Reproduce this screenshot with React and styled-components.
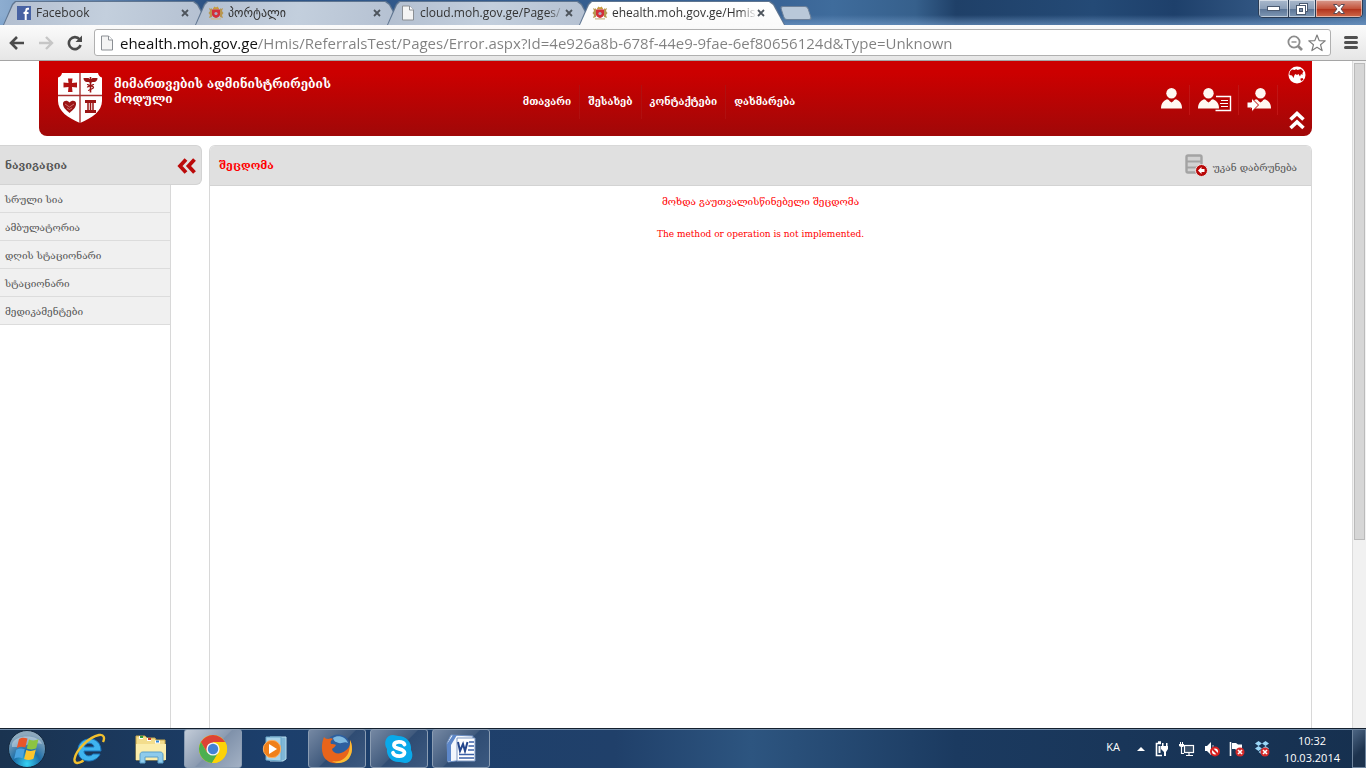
import React, { useState } from "react";
import styled, { createGlobalStyle } from "styled-components";

const tabs = [
  { id: "fb", title: "Facebook", icon: "facebook" },
  { id: "portal", title: "პორტალი", icon: "crest" },
  { id: "cloud", title: "cloud.moh.gov.ge/Pages/", icon: "page" },
  { id: "ehealth", title: "ehealth.moh.gov.ge/Hmis", icon: "crest" },
];

const menu = ["მთავარი", "შესახებ", "კონტაქტები", "დახმარება"];

const sections = [
  "სრული სია",
  "ამბულატორია",
  "დღის სტაციონარი",
  "სტაციონარი",
  "მედიკამენტები",
];

function App() {
  const [currentTab, setCurrentTab] = useState("ehealth");
  const [url, setUrl] = useState(
    "ehealth.moh.gov.ge/Hmis/ReferralsTest/Pages/Error.aspx?Id=4e926a8b-678f-44e9-9fae-6ef80656124d&Type=Unknown"
  );

  return (
    <Screen>
      <GlobalStyle />
      <TabStrip>
        <TabList>
          {tabs.map((tab) => (
            <Tab key={tab.id} $active={tab.id === currentTab}>
              <TabButton onClick={() => setCurrentTab(tab.id)}>
                <TabIcon name={tab.icon} />
                <TabTitle>{tab.title}</TabTitle>
              </TabButton>
              <TabClose aria-label="Close tab">
                <svg width="8" height="8" viewBox="0 0 8 8">
                  <path d="M1 1l6 6M7 1L1 7" stroke="#4d545c" strokeWidth="1.8" />
                </svg>
              </TabClose>
            </Tab>
          ))}
          <NewTab aria-label="New tab" />
        </TabList>
        <WindowButtons>
          <WindowButton aria-label="Minimize" $width="29px">
            <svg width="13" height="5" viewBox="0 0 13 5">
              <rect x="0.5" y="0.5" width="12" height="4" fill="#fff" stroke="#4b5a70" />
            </svg>
          </WindowButton>
          <WindowButton aria-label="Restore" $width="27px">
            <svg width="12" height="12" viewBox="0 0 12 12">
              <rect x="3.5" y="0.5" width="8" height="8" fill="#fff" stroke="#4b5a70" />
              <rect x="0.5" y="2.5" width="9" height="9" fill="#fff" stroke="#4b5a70" />
              <rect x="3.5" y="5.5" width="3" height="3" fill="#7f90a8" stroke="#4b5a70" />
            </svg>
          </WindowButton>
          <WindowButton aria-label="Close" $width="47px" $red>
            <svg width="12" height="10" viewBox="0 0 12 10">
              <path
                d="M0.5 0.5h3.5l2 2.3 2-2.3h3.5L8 5l3.5 4.5H8L6 7.2 4 9.5H0.5L4 5z"
                fill="#fff"
                stroke="#5a4a55"
              />
            </svg>
          </WindowButton>
        </WindowButtons>
      </TabStrip>

      <Toolbar>
        <ToolButton aria-label="Back">
          <svg width="16" height="14" viewBox="0 0 16 14">
            <path d="M15 7H3M8 1L2 7l6 6" fill="none" stroke="#4a4a4a" strokeWidth="2.6" />
          </svg>
        </ToolButton>
        <ToolButton aria-label="Forward">
          <svg width="16" height="14" viewBox="0 0 16 14">
            <path d="M1 7h12M8 1l6 6-6 6" fill="none" stroke="#c6c6c6" strokeWidth="2.4" />
          </svg>
        </ToolButton>
        <ToolButton aria-label="Reload">
          <svg width="16" height="16" viewBox="0 0 16 16">
            <path
              d="M12.6 4.4A6 6 0 1 0 13.6 10"
              fill="none"
              stroke="#4a4a4a"
              strokeWidth="2.6"
            />
            <path d="M15 0.5V7H8.5z" fill="#4a4a4a" />
          </svg>
        </ToolButton>
        <AddressBar>
          <TabIcon name="page" />
          <Address
            aria-label="Address"
            value={url}
            onChange={(e) => setUrl(e.target.value)}
          />
          <AddressButton aria-label="Zoom">
            <svg width="16" height="16" viewBox="0 0 16 16">
              <circle cx="7" cy="7" r="5.6" fill="none" stroke="#8c8c8c" strokeWidth="1.8" />
              <path d="M4.5 7h5" stroke="#8c8c8c" strokeWidth="1.4" />
              <path d="M11 11l4 4" stroke="#8c8c8c" strokeWidth="2.6" />
            </svg>
          </AddressButton>
          <AddressButton aria-label="Bookmark">
            <svg width="18" height="18" viewBox="0 0 18 18">
              <path
                d="M9 1l2.2 5.6 6 .3-4.7 3.8 1.6 5.9L9 13.3l-5.1 3.3 1.6-5.9L.8 6.9l6-.3z"
                fill="#fff"
                stroke="#7d7d7d"
                strokeWidth="1.2"
                strokeLinejoin="round"
              />
            </svg>
          </AddressButton>
        </AddressBar>
        <ToolButton aria-label="Menu">
          <svg width="14" height="13" viewBox="0 0 14 13">
            <path
              d="M1.5 1.5h11M1.5 6.5h11M1.5 11.5h11"
              stroke="#505050"
              strokeWidth="3"
              strokeLinecap="round"
            />
          </svg>
        </ToolButton>
      </Toolbar>

      <Viewport>
        <Page>
          <Header>
            <Brand>
              <Shield />
              <BrandTitle>მიმართვების ადმინისტრირების მოდული</BrandTitle>
            </Brand>
            <Menu>
              {menu.map((item) => (
                <MenuLink href="#" key={item}>
                  {item}
                </MenuLink>
              ))}
            </Menu>
            <UserActions>
              <UserButton aria-label="Profile">
                <svg width="22" height="22" viewBox="0 0 22 22">
                  <Person x={0} />
                </svg>
              </UserButton>
              <UserButton aria-label="User details">
                <svg width="34" height="24" viewBox="0 0 34 24">
                  <Person x={0} />
                  <path d="M18 8.5h14.5v14H17.5" fill="none" stroke="#fff" strokeWidth="1.4" />
                  <path d="M23 12.5h7M22 15.5h8M23 18.5h7" stroke="#fff" strokeWidth="1.2" />
                </svg>
              </UserButton>
              <UserButton aria-label="Sign in">
                <svg width="24" height="24" viewBox="0 0 24 24">
                  <Person x={3} />
                  <path
                    d="M0 14h4.500V10l7 7-7 7v-4H0z"
                    fill="#fff"
                    stroke="#b50505"
                    strokeWidth="1"
                  />
                </svg>
              </UserButton>
            </UserActions>
            <HeaderTools>
              <IconButton aria-label="Language">
                <svg width="18" height="18" viewBox="0 0 18 18">
                  <circle cx="9" cy="9" r="8.5" fill="#fff" />
                  <path
                    d="M2 5.500l2-2 3 .5 1-1 1.500 1L13 3l2.500 2.500-1 1.500v2l-1.500-1-1 2.500-1.500-2.500-1.500 1-1.500-1-1 1L5.500 12 4 9.500 1.500 9V7z"
                    fill="#c20303"
                  />
                  <path d="M12.500 12.500l2-.5 1 1.500-2 1.500-1-1z" fill="#c20303" />
                </svg>
              </IconButton>
              <IconButton aria-label="Hide header">
                <svg width="16" height="20" viewBox="0 0 16 20">
                  <path
                    d="M1.500 8.500L8 2.500l6.500 6M1.500 17L8 11l6.500 6"
                    fill="none"
                    stroke="#fff"
                    strokeWidth="3.600"
                  />
                </svg>
              </IconButton>
            </HeaderTools>
          </Header>

          <Columns>
            <Sidebar>
              <SidebarHeader>
                <SectionTitle>ნავიგაცია</SectionTitle>
                <IconButton aria-label="Hide navigation">
                  <svg width="19" height="16" viewBox="0 0 19 16">
                    <path
                      d="M9 1.500L3 8l6 6.500M17.500 1.500L11.500 8l6 6.500"
                      fill="none"
                      stroke="#bb0a0a"
                      strokeWidth="3.800"
                    />
                  </svg>
                </IconButton>
              </SidebarHeader>
              <SidebarList>
                {sections.map((name) => (
                  <SidebarItem key={name}>
                    <SidebarLink href="#">{name}</SidebarLink>
                  </SidebarItem>
                ))}
              </SidebarList>
            </Sidebar>
            <Main>
              <MainHeader>
                <SectionTitle $red>შეცდომა</SectionTitle>
                <BackLink href="#">
                  <svg width="23" height="23" viewBox="0 0 23 23">
                    <rect x="1.500" y="1.500" width="15" height="17" rx="1.500" fill="#d2d2d2" stroke="#a3a3a3" strokeWidth="2.400" />
                    <path d="M1 7.500h16M1 13.500h10" stroke="#a3a3a3" strokeWidth="2" />
                    <circle cx="16.500" cy="16.500" r="6" fill="#b90808" stroke="#e8e8e8" />
                    <path d="M13 16.500l3.500-3.500v2h3v3h-3v2z" fill="#fff" />
                  </svg>
                  <BackText>უკან დაბრუნება</BackText>
                </BackLink>
              </MainHeader>
              <Message>მოხდა გაუთვალისწინებელი შეცდომა</Message>
              <Details>The method or operation is not implemented.</Details>
            </Main>
          </Columns>
        </Page>
        <Scrollbar>
          <ScrollThumb />
        </Scrollbar>
      </Viewport>

      <Taskbar>
        <StartButton aria-label="Start">
          <WindowsOrb />
        </StartButton>
        <TaskList>
          <TaskButton aria-label="Internet Explorer">
            <ExplorerE />
          </TaskButton>
          <TaskButton aria-label="Windows Explorer">
            <Folder />
          </TaskButton>
          <TaskButton aria-label="Google Chrome" $open $focused>
            <Chrome />
          </TaskButton>
          <TaskButton aria-label="Media Player">
            <MediaPlayer />
          </TaskButton>
          <TaskButton aria-label="Firefox" $open>
            <Firefox />
          </TaskButton>
          <TaskButton aria-label="Skype" $open>
            <Skype />
          </TaskButton>
          <TaskButton aria-label="Word" $open>
            <Word />
          </TaskButton>
        </TaskList>
        <Tray>
          <Language>KA</Language>
          <TrayButton aria-label="Show hidden icons">
            <svg width="8" height="4" viewBox="0 0 8 4">
              <path d="M4 0l4 4H0z" fill="#fff" />
            </svg>
          </TrayButton>
          <TrayButton aria-label="Power">
            <svg width="16" height="16" viewBox="0 0 16 16">
              <path d="M8 14.500H2.500v-12H7M4 1h3" fill="none" stroke="#fff" strokeWidth="1.600" />
              <path d="M4.500 5v7h2V5z" fill="#fff" />
              <path d="M7 5h7v3l-2 3v4h-2v-4L7 8zM8 2h1.500v3H8zM12 2h1.500v3H12z" fill="#fff" />
            </svg>
          </TrayButton>
          <TrayButton aria-label="Network">
            <svg width="16" height="16" viewBox="0 0 16 16">
              <rect x="5.500" y="4.500" width="9" height="7" fill="#3b5069" stroke="#fff" strokeWidth="1.200" />
              <path d="M7 14.500h7M10 12v2M2.500 6v6.500H5" fill="none" stroke="#fff" strokeWidth="1.200" />
              <path d="M1 1h1v2h1V1h1v2h1v2L4 6H2L0 5V3h1z" fill="#fff" />
            </svg>
          </TrayButton>
          <TrayButton aria-label="Volume">
            <svg width="16" height="16" viewBox="0 0 16 16">
              <path d="M1 5h2l4-4v13l-4-4H1z" fill="#fff" />
              <path d="M9 4v4" stroke="#b5c2d1" />
              <circle cx="11" cy="10.500" r="4" fill="#fff" stroke="#d81e1e" strokeWidth="2" />
              <path d="M8.500 8l5 5" stroke="#d81e1e" strokeWidth="2" />
            </svg>
          </TrayButton>
          <TrayButton aria-label="Action center">
            <svg width="16" height="16" viewBox="0 0 16 16">
              <path d="M1.500 1v14" stroke="#fff" strokeWidth="1.600" />
              <path d="M3 2h4l2 1.500h4v6H8L6 8H3z" fill="#fff" />
              <RedCross />
            </svg>
          </TrayButton>
          <TrayButton aria-label="Dropbox">
            <svg width="16" height="16" viewBox="0 0 16 16">
              <path
                d="M4.500 0L8 2.500 4.500 5 1 2.500zM11.500 0L15 2.500 11.500 5 8 2.500zM4.500 5L8 7.500 4.500 10 1 7.500zM11.500 5L15 7.500 11.500 10 8 7.500zM8 8.500l3 2.500-3 2.500L4.500 11z"
                fill="#9bd6f7"
              />
              <RedCross />
            </svg>
          </TrayButton>
          <Clock>
            <span>10:32</span>
            <span>10.03.2014</span>
          </Clock>
          <ShowDesktop aria-label="Show desktop" />
        </Tray>
      </Taskbar>
    </Screen>
  );
}

function TabIcon({ name }) {
  switch (name) {
    case "facebook":
      return (
        <svg width="16" height="16" viewBox="0 0 16 16">
          <rect x="1" y="1" width="14" height="14" fill="#4762a3" />
          <path
            d="M13 3.800h-1.400c-1 0-1.300.5-1.300 1.300V6.500M7.500 8h5M9.700 6v9"
            fill="none"
            stroke="#fff"
            strokeWidth="2"
          />
        </svg>
      );
    case "crest":
      return (
        <svg width="16" height="16" viewBox="0 0 16 16">
          <path
            d="M1 3l2 1 1-1v9l-3 1 1-3-1.500-2L2 6zM15 3l-2 1-1-1v9l3 1-1-3 1.500-2L14 6z"
            fill="#b8964f"
          />
          <path d="M5 3.500l1.500-2L8 2.500l1.500-1L11 3.500v1H5z" fill="#c79a3c" />
          <path d="M4 4.500h8v5c0 2-2 3-4 3.500-2-.5-4-1.500-4-3.500z" fill="#d3303a" />
          <circle cx="8" cy="8.500" r="1.600" fill="#a9b0c6" />
          <path d="M3 13.800h10" stroke="#cbb98c" strokeWidth="1.200" />
        </svg>
      );
    default:
      return (
        <svg width="16" height="16" viewBox="0 0 16 16">
          <path d="M2.500 1h7L13.500 5v10h-11z" fill="#f4f4f4" stroke="#8b8f94" />
          <path d="M9.500 1v4h4" fill="#fff" stroke="#8b8f94" />
        </svg>
      );
  }
}

function Person({ x }) {
  return (
    <g transform={`translate(${x} 0)`} fill="#fff8f2">
      <circle cx="10.500" cy="5.200" r="5.200" />
      <path d="M0 20.500c0-5 2-7.500 6-9.300 1 0 2 .8 2.500 1.800l2 1.500 2-1.500c.500-1 1.500-1.800 2.500-1.800 4 1.800 6 4.300 6 9.300z" />
    </g>
  );
}

function RedCross() {
  return (
    <g>
      <circle cx="11" cy="11" r="4.500" fill="#d42a2a" />
      <path d="M9 9l4 4M13 9l-4 4" stroke="#fff" strokeWidth="1.600" />
    </g>
  );
}

function Shield() {
  return (
    <svg width="46" height="52" viewBox="0 0 46 52">
      <path
        d="M5 1h36c.500 2.500 2 4 4 4.500V29c0 10-10 17-22 22C11 46 1 39 1 29V5.500C3 5 4.500 3.500 5 1z"
        fill="#fff"
      />
      <path d="M23 1v50M1 23.500h44" stroke="#a83030" strokeWidth="1.400" />
      <path d="M11 6.500h4.500l-.5 4.500 5-.5v5l-5-.5.5 5H11l.5-5-5 .5v-5l5 .5z" fill="#b01212" />
      <path d="M33.500 5v15.500" stroke="#9b1515" strokeWidth="1.600" />
      <path
        d="M26.500 6h5l2 1.500 2-1.500h5c0 2-1 3.500-3 4h-2l-2 1-2-1h-2c-2-.5-3-2-3-4z"
        fill="#9b1515"
      />
      <path
        d="M30.500 12c0 2 6 1.500 6 3.500s-5 1.500-5 3.500M36.500 12c0 2-6 1.500-6 3.500"
        fill="none"
        stroke="#9b1515"
        strokeWidth="1.300"
      />
      <path d="M12.500 41C9 38 5.500 35 6 31c1-3 4.500-3 6.500-.5 2-2.500 6-2.500 6.500.500.500 4-3 7-6.500 10z" fill="#9b1515" />
      <path d="M8 32l4.500 3 4.500-3M10 36l2.500 1.500L15 36" fill="none" stroke="#d98383" strokeWidth=".8" />
      <path d="M28 28h11v3H28zM28 38h11v3H28z" fill="#9b1515" />
      <path d="M31 31v7M33.500 31v7M36 31v7" stroke="#9b1515" strokeWidth="1.500" />
    </svg>
  );
}

function WindowsOrb() {
  return (
    <svg width="40" height="40" viewBox="0 0 40 40">
      <defs>
        <radialGradient id="orb" cx="50%" cy="90%" r="80%">
          <stop offset="0" stopColor="#35d3f5" />
          <stop offset="0.450" stopColor="#1d6ea8" />
          <stop offset="1" stopColor="#8ea9bd" />
        </radialGradient>
      </defs>
      <circle cx="20" cy="20" r="18.500" fill="url(#orb)" stroke="#14293f" />
      <path d="M5 15C8 5 32 5 35 15c-9-3-20 4-30 3z" fill="#fff" opacity=".35" />
      <path d="M12 10c3-2 5.500-1.500 8.500-.5l-2.200 9c-3-1-5.500-1-8.500.5z" fill="#e8562a" />
      <path d="M22 10.500c3 1 6 1.500 9.500-.5l-2.200 9c-3 2-6.500 1.500-9.500.5z" fill="#8cc441" />
      <path d="M9.300 20.800c3-1.500 5.500-1.500 8.500-.5l-2.200 9c-3-1-5.500-1-8.500.5z" fill="#49a3e0" />
      <path d="M19.300 21c3 1 6 1.500 9.500-.5l-2.200 9c-3 2-6.500 1.500-9.500.5z" fill="#fbc52d" />
    </svg>
  );
}

function ExplorerE() {
  return (
    <svg width="34" height="34" viewBox="0 0 34 34">
      <path
        d="M29 19H12c0 5 6 6.500 9 3h7c-3 9-22 11-22-4C6 4 29 2 29 19zM12.500 15H22c-.5-5-9-5-9.500 0z"
        fill="#3fb4ef"
        fillRule="evenodd"
        stroke="#1a76bd"
      />
      <path
        d="M31 10c2-4 1-8-4-7C17 5 4 18 2.500 27c-.5 5 4 5 9 1.500"
        fill="none"
        stroke="#f2c02e"
        strokeWidth="2.400"
      />
    </svg>
  );
}

function Folder() {
  return (
    <svg width="34" height="32" viewBox="0 0 34 32">
      <path d="M2 3h9l2 2h8l1 2h9v20H2z" fill="#f3dd8c" stroke="#c9a84b" />
      <path d="M5 4.500h4M13 6.500h4M21 9h5" stroke="#fff" strokeWidth="3" />
      <path d="M6 4h3" stroke="#2f9c3a" strokeWidth="2" />
      <path d="M14 6h3" stroke="#c83a2b" strokeWidth="2" />
      <path d="M22 8.500h3" stroke="#2d84d4" strokeWidth="2" />
      <path d="M2 11h30v16H2z" fill="#fbedac" />
      <path d="M6 30v-8c0-2 1-3 3-3h17c2 0 3 1 3 3v8h-5v-6H11v6z" fill="#8ecbec" stroke="#5a9fca" />
    </svg>
  );
}

function Chrome() {
  return (
    <svg width="30" height="30" viewBox="0 0 30 30">
      <circle cx="15" cy="15" r="14" fill="#fcd209" />
      <path d="M2.900 8A14 14 0 0 1 27.100 8L15 8.500 9 18.500z" fill="#dd4335" />
      <path d="M2.900 8A14 14 0 0 0 14 29l6.500-10.500L9 18.500z" fill="#4caf50" />
      <path d="M27.100 8H15v5l5.500 5.500L14 29A14 14 0 0 0 27.100 8z" fill="#fcd209" />
      <circle cx="15" cy="15" r="6.600" fill="#f5f5f5" />
      <circle cx="15" cy="15" r="5.200" fill="#4382d6" />
    </svg>
  );
}

function MediaPlayer() {
  return (
    <svg width="28" height="28" viewBox="0 0 28 28">
      <path d="M9 2h16v22l-3 2H9z" fill="#7fb6d6" stroke="#b7dcee" />
      <path d="M5 2h15v24l-15-1z" fill="#a9d3e8" stroke="#6ba7c9" />
      <circle cx="11" cy="14" r="8.700" fill="#f08019" stroke="#fbb065" />
      <path d="M8 9l8 5-8 5z" fill="#fff" />
    </svg>
  );
}

function Firefox() {
  return (
    <svg width="34" height="34" viewBox="0 0 34 34">
      <circle cx="18" cy="15" r="12.500" fill="#2d5f9f" />
      <path d="M13 6c5-4 13-1 15 5-4-2-6 1-9 0s-5-1-6-5z" fill="#7fb9e0" />
      <path
        d="M4 5c1 1 2 2 4 2 2-1 4-1 5 0-2 1-3 3-2 5 2 0 4 0 5 1-1 2-3 3-4 4 1 5 8 6 13 2 4-3 6-6 5-11 3 6 3 13-2 18-7 8-21 7-25-3C1 17 2 10 4 5z"
        fill="#e8641b"
      />
      <path d="M30 8c4 8 2 19-6 22-5 2-9 1-12-1 8 2 15-3 17-10 1-4 1-8 1-11z" fill="#fbbc34" />
    </svg>
  );
}

function Skype() {
  return (
    <svg width="32" height="32" viewBox="0 0 32 32">
      <path
        d="M10 2c2 0 4 1 5 1 8 0 14 6 13 14 3 5 1 13-6 13-2 0-4-1-5-1C9 30 3 23 4 16 0 10 3 2 10 2z"
        fill="#0aa9ea"
      />
      <path
        d="M21.500 11.500C20 8 11 8 11 12.200c0 4.500 10.500 2.800 10.500 7.600 0 4.400-10 4.200-11.500 0"
        fill="none"
        stroke="#fff"
        strokeWidth="3.800"
        strokeLinecap="round"
      />
    </svg>
  );
}

function Word() {
  return (
    <svg width="32" height="32" viewBox="0 0 32 32">
      <path d="M6 2l22 1-2 23L3 29 2 10z" fill="#f3f7fc" stroke="#6d8fc4" />
      <path d="M2 28V11l6-9h4L6 12v16z" fill="#5d87c9" />
      <path d="M12 5h18v23H12z" fill="#fff" stroke="#7c97c2" />
      <path d="M13 9l2 9 3-7 2 7 2.500-9" fill="none" stroke="#24468c" strokeWidth="2" />
      <path d="M24 9h5M23.500 13h5.500M23 17h6M14 21.500h15M14 25h15" stroke="#3c62a8" strokeWidth="1.600" />
    </svg>
  );
}

const GlobalStyle = createGlobalStyle`
  body {
    margin: 0;
    font-family: "DejaVu Serif", serif;
  }

  * {
    box-sizing: border-box;
  }

  button {
    padding: 0;
    border: none;
    background: none;
    cursor: pointer;
  }

  svg {
    display: block;
    flex: none;
  }
`;

const Screen = styled.div`
  display: flex;
  flex-direction: column;
  height: 100vh;
  overflow: hidden;
  background: #fff;
`;

const TabStrip = styled.div`
  display: flex;
  justify-content: space-between;
  align-items: flex-start;
  height: 25px;
  padding: 0 3px;
  background:
    linear-gradient(to bottom, transparent 60%, rgba(120, 160, 205, 0.6)),
    linear-gradient(to right, #8dadd0, #2c5284 15%, #3a6496 57%, #3f6c9c 61%, #36608c 67%, #1f4068 70%, #244a76 80%, #1e406b 86%, #4a729f);
`;

const TabList = styled.div`
  display: flex;
  padding-top: 1px;
`;

const Tab = styled.div`
  position: relative;
  z-index: ${(props) => (props.$active ? 2 : 1)};
  display: flex;
  align-items: center;
  width: 206px;
  height: 24px;
  margin-right: -14px;
  padding: 0 16px 0 13px;
  background: #5f7590;
  clip-path: polygon(0 100%, 9px 3px, 12px 0, calc(100% - 15px) 0, calc(100% - 11px) 3px, 100% 100%);

  &::before {
    content: "";
    position: absolute;
    z-index: -1;
    inset: 1px 1px 0;
    background: ${(props) =>
      props.$active
        ? "linear-gradient(to bottom, #fff, #fafafa)"
        : "linear-gradient(100deg, #b3bfd0, #c3cfdd 50%, #b4c0d1)"};
    clip-path: polygon(0 100%, 9px 3px, 12px 0, calc(100% - 15px) 0, calc(100% - 11px) 3px, 100% 100%);
  }
`;

const TabButton = styled.button`
  display: flex;
  flex: 1;
  align-items: center;
  gap: 4px;
  min-width: 0;
  text-align: left;
`;

const TabTitle = styled.span`
  flex: 1;
  overflow: hidden;
  white-space: nowrap;
  color: #333;
  font: 12px/16px "Open Sans", "DejaVu Sans", sans-serif;
  mask-image: linear-gradient(to right, #000 88%, transparent);
`;

const TabClose = styled.button`
  padding: 4px 4px 4px 0;
`;

const NewTab = styled.button`
  width: 28px;
  height: 14px;
  margin: 5px 0 0 11px;
  border: 1px solid #6d8099;
  border-radius: 3px;
  background: #b9c8d9;
  transform: skewX(18deg);
`;

const WindowButtons = styled.div`
  display: flex;
  height: 18px;
  border: 1px solid #2b3c54;
  border-top: none;
  border-radius: 0 0 5px 5px;
  overflow: hidden;
`;

const WindowButton = styled.button`
  display: flex;
  align-items: center;
  justify-content: center;
  width: ${(props) => props.$width};
  box-shadow: inset 0 0 0 1px rgba(255, 255, 255, 0.5);
  background: ${(props) =>
    props.$red
      ? "linear-gradient(to bottom, #d99c8f, #c4543c 50%, #b0301a 51%, #cf6a4a)"
      : "linear-gradient(to bottom, #a9b9cd, #8c9fb8 50%, #5b7495 51%, #7f98b5)"};

  & + & {
    border-left: 1px solid #2b3c54;
  }
`;

const Toolbar = styled.div`
  display: flex;
  align-items: center;
  gap: 13px;
  height: 36px;
  padding: 0 8px 0 9px;
  border-bottom: 1px solid #a5a5a5;
  background: linear-gradient(to bottom, #fbfbfb, #e6e6e6);
`;

const ToolButton = styled.button`
  flex: none;
`;

const AddressBar = styled.div`
  display: flex;
  flex: 1;
  align-items: center;
  height: 27px;
  margin-left: -2px;
  padding: 0 4px;
  border: 1px solid #b0b0b0;
  border-radius: 3px;
  background: #fff;
`;

const Address = styled.input`
  flex: 1;
  min-width: 0;
  padding: 0 0 0 5px;
  border: none;
  outline: none;
  font: 15px/22px "Open Sans", sans-serif;
  color: transparent;
  /* host name in black, the rest of the url in grey */
  background: linear-gradient(to right, #111 143px, #808080 143px);
  background-clip: text;
`;

const AddressButton = styled.button`
  margin-left: 5px;
`;

const Viewport = styled.div`
  display: flex;
  flex: 1;
  min-height: 0;
`;

const Page = styled.div`
  display: flex;
  flex: 1;
  flex-direction: column;
  min-width: 0;
`;

const Header = styled.header`
  display: flex;
  height: 75px;
  margin: 0 40px 0 39px;
  border-radius: 0 0 8px 8px;
  background: linear-gradient(to bottom, #cc0000 15%, #a00808);
`;

const Brand = styled.div`
  display: flex;
  align-items: flex-start;
  gap: 11px;
  width: 38%;
  padding: 11px 0 0 18px;
`;

const BrandTitle = styled.h1`
  width: 230px;
  margin: 5px 0 0;
  color: #fff;
  font-size: 12px;
  line-height: 15px;
`;

const Menu = styled.nav`
  display: flex;
  align-items: center;
  padding-top: 6px;
`;

const MenuLink = styled.a`
  padding: 10px 8px;
  color: #fff;
  font-size: 10px;
  font-weight: bold;
  line-height: 14px;
  text-decoration: none;

  &:first-child {
    padding-left: 0;
  }

  & + & {
    border-left: 1px solid #b01010;
  }
`;

const UserActions = styled.div`
  display: flex;
  align-items: center;
  margin-left: auto;
  padding: 2px 4px 0 0;
`;

const UserButton = styled.button`
  display: flex;
  align-items: flex-start;
  height: 30px;
  padding: 3px 6px 3px 8px;
  border-right: 1px solid #c01515;
`;

const HeaderTools = styled.div`
  display: flex;
  flex-direction: column;
  align-items: center;
  justify-content: space-between;
  width: 30px;
  padding: 5px 0;
`;

const IconButton = styled.button`
  flex: none;
`;

const Columns = styled.div`
  display: flex;
  flex: 1;
  gap: 7px;
  margin: 9px 40px 0 0;
`;

const Sidebar = styled.aside`
  display: flex;
  flex-direction: column;
  width: 202px;
`;

const SidebarHeader = styled.div`
  display: flex;
  align-items: center;
  justify-content: space-between;
  height: 40px;
  padding: 2px 5px 0 5px;
  border: 1px solid #d3d3d3;
  border-left: none;
  border-radius: 0 6px 6px 0;
  background: #e0e0e0;
`;

const SectionTitle = styled.h2`
  margin: 0;
  color: ${(props) => (props.$red ? "#f00" : "#555")};
  font-size: 11px;
  line-height: 14px;
`;

const SidebarList = styled.ul`
  flex: 1;
  width: 171px;
  margin: 0;
  padding: 0;
  border-right: 1px solid #d8d8d8;
  list-style: none;
`;

const SidebarItem = styled.li`
  border-bottom: 1px solid #dcdcdc;
  background: #f0f0f0;
`;

const SidebarLink = styled.a`
  display: block;
  padding: 8px 5px 5px;
  color: #555;
  font-size: 10px;
  line-height: 14px;
  text-decoration: none;
`;

const Main = styled.main`
  flex: 1;
  border: 1px solid #d8d8d8;
  border-bottom: none;
  border-radius: 6px 6px 0 0;
`;

const MainHeader = styled.div`
  display: flex;
  align-items: center;
  justify-content: space-between;
  height: 40px;
  margin-bottom: 8px;
  padding: 0 14px 0 9px;
  border-bottom: 1px solid #d3d3d3;
  border-radius: 5px 5px 0 0;
  background: #e0e0e0;
`;

const BackLink = styled.a`
  display: flex;
  align-items: center;
  gap: 5px;
  color: #555;
  text-decoration: none;
`;

const BackText = styled.span`
  padding-top: 4px;
  font-size: 10px;
  line-height: 14px;
`;

const Message = styled.p`
  margin: 0 0 16px;
  color: #f00;
  font-size: 10px;
  line-height: 16px;
  text-align: center;
`;

const Details = styled(Message)`
  font-family: "DejaVu Serif Condensed", "DejaVu Serif", serif;
`;

const Scrollbar = styled.div`
  width: 14px;
  padding: 2px 1px;
  border-left: 1px solid #dcdcdc;
  background: #f1f1f1;
`;

const ScrollThumb = styled.div`
  height: 72%;
  border: 1px solid #bababa;
  background: #d6d6d6;
`;

const Taskbar = styled.footer`
  display: flex;
  height: 40px;
  border-top: 1px solid #14202e;
  box-shadow: inset 0 1px 0 #6f8aa8;
  background: linear-gradient(to right, #1a3350, #1c3f6c 20%, #20406a 45%, #2d5580 55%, #1b3a60 70%, #16304f);
`;

const StartButton = styled.button`
  width: 60px;
  padding-left: 7px;
`;

const TaskList = styled.div`
  display: flex;
  gap: 4px;
`;

const TaskButton = styled.button`
  display: flex;
  align-items: center;
  justify-content: center;
  width: 58px;
  height: 39px;
  border: 1px solid ${(props) => (props.$open ? "#8b9db3" : "transparent")};
  border-radius: 3px;
  background: ${(props) =>
    props.$focused
      ? "linear-gradient(135deg, #c3ccd8, #8b9bb1 50%, #7f91aa 51%, #a3b1c4)"
      : props.$open
        ? "linear-gradient(135deg, #7588a3, #405a7d 50%, #2f4c73 51%, #3c5980)"
        : "none"};
`;

const Tray = styled.div`
  display: flex;
  align-items: center;
  gap: 9px;
  margin-left: auto;
  color: #fff;
  font: 11px/17px "Open Sans", sans-serif;
`;

const Language = styled.span`
  padding: 0 8px 4px 0;
`;

const TrayButton = styled.button`
  flex: none;
`;

const Clock = styled.div`
  display: flex;
  flex-direction: column;
  align-items: center;
  padding: 0 3px 0 5px;
`;

const ShowDesktop = styled.button`
  align-self: stretch;
  width: 14px;
  border: 1px solid #6f859e;
  background: linear-gradient(135deg, #4c6583, #1d334e 60%);
`;

export default App;
